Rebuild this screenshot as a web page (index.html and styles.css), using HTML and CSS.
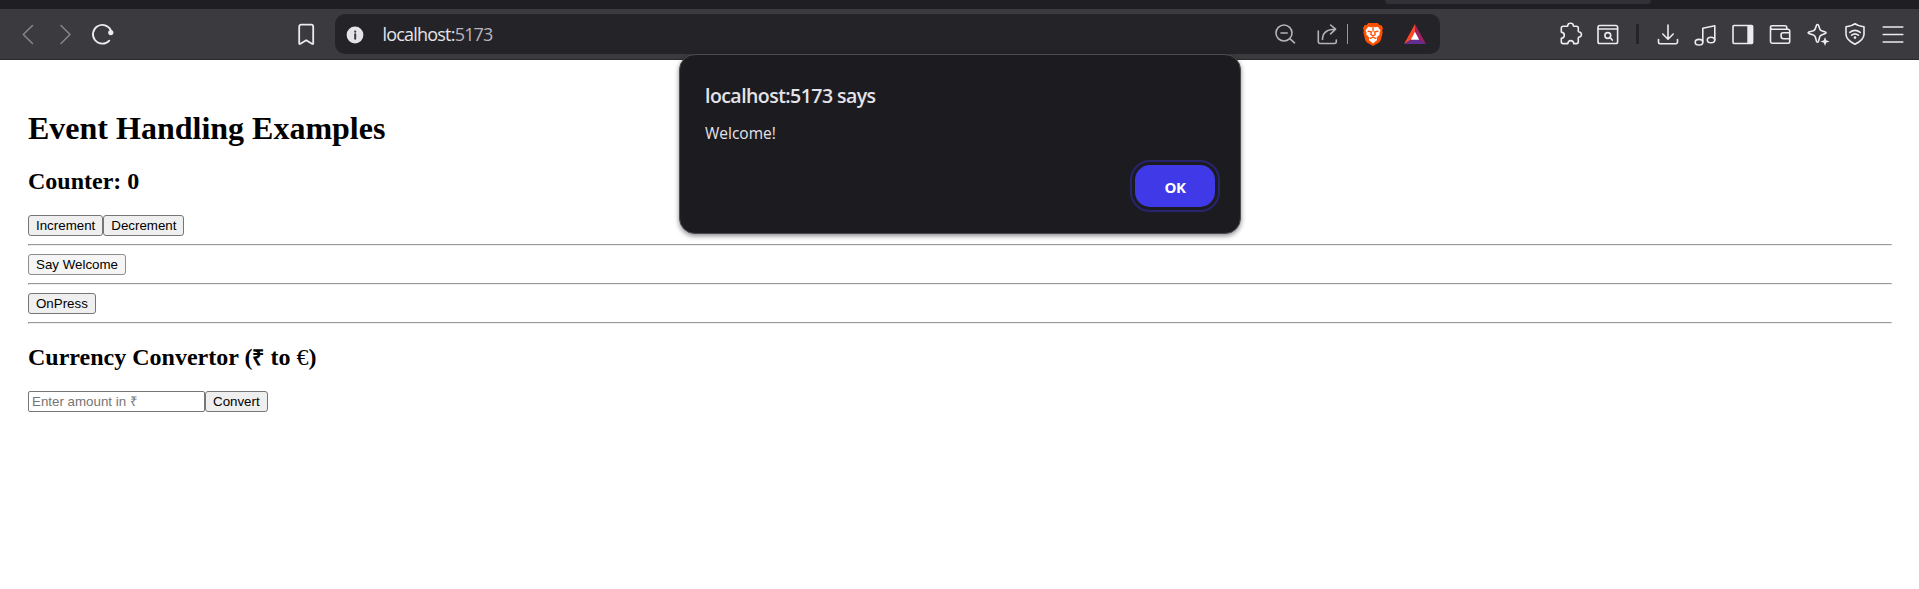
FILE: index.html
```html
<!DOCTYPE html>
<html lang="en">
<head>
<meta charset="utf-8">
<title>Event Handling Examples</title>
<link rel="stylesheet" href="styles.css">
</head>
<body>
<div class="tabstrip"><div class="tab"></div></div>
<header class="toolbar">
  <nav class="nav">
    <span class="slot dim"><svg class="icon" viewBox="0 0 24 24"><path d="M16.5 3.5 7.3 12.5l9.2 9"/></svg></span>
    <span class="slot dim"><svg class="icon" viewBox="0 0 24 24"><path d="M8 3.5l9 9-9 9"/></svg></span>
    <span class="slot"><svg class="icon" viewBox="0 0 24 24"><path class="bold" d="M18.3 18.6A9.4 9.4 0 1 1 20 8.6"/><circle class="fill" cx="19.8" cy="10.6" r="2.6"/></svg></span>
    <span class="slot bookmark"><svg class="icon" viewBox="0 0 24 24"><path class="bold" d="M5.2 21.5V4.6a2 2 0 0 1 2-2h10a2 2 0 0 1 2 2v16.9a.5.5 0 0 1-.8.4l-6.2-3.7-6.2 3.7a.5.5 0 0 1-.8-.4z"/></svg></span>
  </nav>
  <div class="address">
    <svg class="icon info" viewBox="0 0 24 24"><circle cx="12" cy="13" r="8.4" fill="#e4e3e9"/><path class="stem" d="M12.2 12.300v4.400"/><circle cx="12.2" cy="9.7" r="1.1" fill="#3a393f"/></svg>
    <span class="url">localhost:<span class="port">5173</span></span>
    <div class="actions">
      <svg class="icon zoom" viewBox="0 0 24 24"><circle cx="11" cy="11" r="8"/><path d="M17 16.8l4.5 4M8 11h6.2"/></svg>
      <svg class="icon share" viewBox="0 0 24 24"><path d="M3.3 9v10.5a2 2 0 0 0 2 2h14a2 2 0 0 0 2-2V18M7.5 17.5c0-6 4-10.3 13-10.3M15.6 3l5 4.2-5 4.6"/></svg>
      <span class="rule"></span>
      <svg class="icon brave" viewBox="0 0 24 24"><path fill="#ff5000" d="M7.2 1h9.6l1.5 2 2.2.3 1.5 3-.8 2.2.5 1.8-2 8-1.6 2.3L12 24l-6.1-3.4L4.3 18.300l-2-8 .5-1.800L2 6.300l1.500-3L5.700 3z"/><path fill="#fff" d="M7.200 4.800l2.800.5 2-.5 2 .5 2.800-.5 2.700 3.600-1 2.200.2 2-3.200 3.200.7 2.200-4.200 3.400L7.800 18l.7-2.200-3.200-3.200.2-2-1-2.200z"/><path stroke="#ff5000" stroke-width="1.300" d="M7 9.200l3.400.8-.6 2.600 2.200 1.200 2.200-1.200-.6-2.600 3.400-.8M12 5.500V9M9.500 16.300l2.500-1.300 2.500 1.300"/></svg>
      <svg class="icon bat" viewBox="0 0 24 24"><path fill="#ff4724" d="M12 2v8.200L8.300 17.600 1 22z"/><path fill="#9e1f63" d="M12 2l11 20-7.300-4.400L12 10.200z"/><path fill="#662d91" d="M1 22l7.300-4.400h7.400L23 22z"/><path fill="#fff" d="M12 9.800l4.200 8H7.800z"/></svg>
    </div>
  </div>
  <div class="tools">
    <span class="slot"><svg class="icon" viewBox="0 0 24 24"><path d="M2.300 6.200q0-2 2-2h3.900c.4 0 .6-.3.6-.8 0-1.300 1.200-2.200 2.700-2.200s2.800.9 2.800 2.200c0 .5.200.8.700.8h2.500q1.800 0 1.800 1.800v3.200c0 .5.300.7.900.8 1.400.2 2.200 1.200 2.200 2.500s-.8 2.300-2.200 2.500c-.6.1-.9.400-.9.900v3.900q0 1.800-1.800 1.800h-2.700c-.3-2-1.300-3-3-3s-2.700 1-3 3H4.200q-1.900 0-1.900-1.800v-3.500c1.800-.2 3-1.400 3-3.100s-1.200-2.900-3-3.100z"/></svg></span>
    <span class="slot"><svg class="icon" viewBox="0 0 24 24"><rect x="2" y="3.500" width="19.600" height="18" rx="1.800"/><path d="M2 7h19.600"/><circle cx="11.800" cy="13.500" r="2.900"/><path class="bold" d="M14 15.500l2.300 2.500"/></svg></span>
    <span class="splitter"></span>
    <span class="slot"><svg class="icon" viewBox="0 0 24 24"><path d="M12 3v14M6.800 12l5.200 5.200 5.200-5.200M2.500 17.500V20a1.700 1.700 0 0 0 1.700 1.700h15.600a1.700 1.700 0 0 0 1.700-1.700v-2.500"/></svg></span>
    <span class="slot"><svg class="icon" viewBox="0 0 24 24"><ellipse cx="6" cy="20.200" rx="3.800" ry="2.800"/><ellipse cx="18" cy="18" rx="3.700" ry="2.800"/><path d="M9.800 20V6.200l12-2.400V18"/></svg></span>
    <span class="slot"><svg class="icon" viewBox="0 0 24 24"><rect x="2" y="3.500" width="19.600" height="18" rx="1"/><path class="fill" d="M16.300 3.500h5.300v18h-5.300z"/></svg></span>
    <span class="slot"><svg class="icon" viewBox="0 0 24 24"><path d="M2.500 5v14.500a1.700 1.700 0 0 0 1.700 1.700h15.800a1.700 1.700 0 0 0 1.700-1.700V9a1.700 1.700 0 0 0-1.700-1.700H4.500Q2.500 7.300 2.500 5.500T4.300 3.700h12.500q2 0 2 2v1.600M21.700 10.800h-6.200q-2.400 0-2.400 1.600v1.900q0 2.400 2.400 2.400h6.200"/></svg></span>
    <span class="slot"><svg class="icon" viewBox="0 0 24 24"><path d="M11.500 2.500q.7 0 1 .8l1.300 3.600q.5 1.300 1.800 1.800l3.700 1.300q1.500.7 0 1.500l-3.700 1.500q-1.300.5-1.800 1.800l-1.300 4.500q-1 1.600-2 0l-1.300-4.500q-.5-1.300-1.800-1.800l-4.500-1.500q-1.500-.8 0-1.500l4.500-1.300q1.300-.5 1.800-1.800l1.300-3.600q.3-.8 1-.8z"/><path class="fill" d="M19 15l1.200 3.300 3.300 1.200-3.300 1.200L19 24l-1.200-3.300-3.300-1.200 3.300-1.200z"/></svg></span>
    <span class="slot"><svg class="icon" viewBox="0 0 24 24"><path d="M12 1.700c2.500 2 5.500 2.700 9 3v7.500c0 4-4 7.500-9 10-5-2.500-9-6-9-10V4.700c3.500-.3 6.500-1 9-3zM6.800 10.400q5.200-4 10.400 0M8.600 13.200q3.400-2.700 6.800 0"/><circle class="fill" cx="12" cy="15.600" r="1.300"/></svg></span>
    <span class="slot"><svg class="icon" viewBox="0 0 24 24"><path d="M2.200 5h19.600M2.200 12.500h19.600M2.200 20h19.600"/></svg></span>
  </div>
</header>
<main class="page">
  <h1>Event Handling Examples</h1>
  <h2>Counter: 0</h2>
  <div class="row"><button>Increment</button><button>Decrement</button></div>
  <hr>
  <div class="row"><button class="hovered">Say Welcome</button></div>
  <hr>
  <div class="row"><button>OnPress</button></div>
  <hr>
  <h2>Currency Convertor (<span class="rupee">₹</span> to <span class="euro">€</span>)</h2>
  <div class="row"><input type="text" placeholder="Enter amount in ₹"><button>Convert</button></div>
</main>
<div class="dialog" role="alertdialog">
  <div class="dialog-title">localhost:5173 says</div>
  <div class="dialog-message">Welcome!</div>
  <div class="dialog-buttons"><button class="ok">OK</button></div>
</div>
</body>
</html>
```
FILE: styles.css
```css
* { box-sizing: border-box; }
body {
  margin: 0;
  background: #fff;
  color: #000;
  font-family: "Liberation Serif", serif;
}
.tabstrip {
  height: 9px;
  padding-left: 1385px;
  background: #1f1e23;
}
.tab {
  width: 266px;
  height: 4px;
  background: #323137;
  border-radius: 0 0 8px 8px;
}
.toolbar {
  display: flex;
  height: 51px;
  background: #3b3a3e;
  border-bottom: 1px solid #29282c;
}
.nav, .tools { display: flex; align-items: center; }
.nav { width: 335px; padding-left: 8.75px; }
.bookmark { margin-left: 166px; }
.slot {
  display: flex;
  flex: none;
  justify-content: center;
  width: 37.5px;
  color: #ececf0;
}
.dim { color: #858489; }
.icon {
  flex: none;
  width: 24px;
  height: 24px;
  fill: none;
  stroke: currentColor;
  stroke-width: 1.6;
  stroke-linecap: round;
  stroke-linejoin: round;
}
.bold { stroke-width: 1.8; }
.fill { fill: currentColor; stroke: none; }
.info, .brave, .bat { stroke: none; }
.stem { stroke: #3a393f; stroke-width: 2; }
.address {
  display: flex;
  align-items: center;
  width: 1105px;
  height: 40px;
  margin-top: 5px;
  padding: 0 13px 0 8px;
  background: #242328;
  border-radius: 10px;
  color: #e4e3e9;
}
.url {
  margin-left: 15.5px;
  margin-bottom: 1px;
  font: 18px/24px "Open Sans", sans-serif;
  letter-spacing: -0.8px;
}
.port { color: #b6b5bd; }
.actions {
  display: flex;
  align-items: center;
  margin-left: auto;
  color: #b4b3b8;
}
.share { margin-left: 18px; }
.rule { width: 1px; height: 20px; margin: 0 13px 0 8px; background: #98979c; }
.bat { margin-left: 18px; }
.tools { margin-left: auto; padding-right: 7.75px; }
.splitter {
  width: 3px;
  height: 20px;
  margin: 0 9.5px;
  background: #252429;
  border-radius: 1px;
}
.page { padding: 29px 27px 28px 28px; display: flow-root; }
h1 { margin: 21.44px 0; font-size: 32px; line-height: 36px; }
h2 { margin: 19.92px 0; font-size: 24px; line-height: 27px; }
.rupee { font-family: "Open Sans", sans-serif; font-size: 21.5px; line-height: 1; }
.euro { font-weight: 400; }
.row { display: flex; height: 21px; }
.row button {
  height: 21px;
  padding: 1px 7px;
  border: 1px solid #767676;
  border-radius: 3px;
  background: #efefef;
  color: #000;
  font: 13.333px/normal "Liberation Sans", sans-serif;
}
.row .hovered { background: #f5f5f5; border-color: #8d8d8d; }
.row input {
  width: 177px;
  height: 21px;
  padding: 1px 3px;
  border: 1px solid #767676;
  border-radius: 2px;
  font: 13.333px/normal "Liberation Sans", sans-serif;
}
.row input::placeholder { color: #757575; }
hr {
  height: 2px;
  margin: 8px 0;
  border: 1px solid;
  border-color: #9a9a9a #eee #eee #9a9a9a;
}
.dialog {
  position: absolute;
  left: 679px;
  top: 54px;
  width: 562px;
  height: 180px;
  padding: 27px 25px 0;
  border: 1px solid #4c4b51;
  border-radius: 16px;
  background: #1c1b1f;
  box-shadow: 0 2px 5px rgba(0, 0, 0, .45);
  color: #e4e3e9;
  font-family: "Open Sans", sans-serif;
}
.dialog-title { font-size: 19.5px; font-weight: 600; line-height: 28px; letter-spacing: -0.55px; }
.dialog-message { margin-top: 12px; font-size: 15.5px; line-height: 22px; }
.dialog-buttons { display: flex; justify-content: flex-end; margin-top: 21px; }
.ok {
  width: 80px;
  height: 42px;
  padding: 2px 0 0;
  border: 0;
  border-radius: 15px;
  background: #3f39e8;
  outline: 2px solid #28256f;
  outline-offset: 3px;
  color: #fff;
  font: 700 15px/20px "Open Sans", sans-serif;
  letter-spacing: -0.5px;
}
```
